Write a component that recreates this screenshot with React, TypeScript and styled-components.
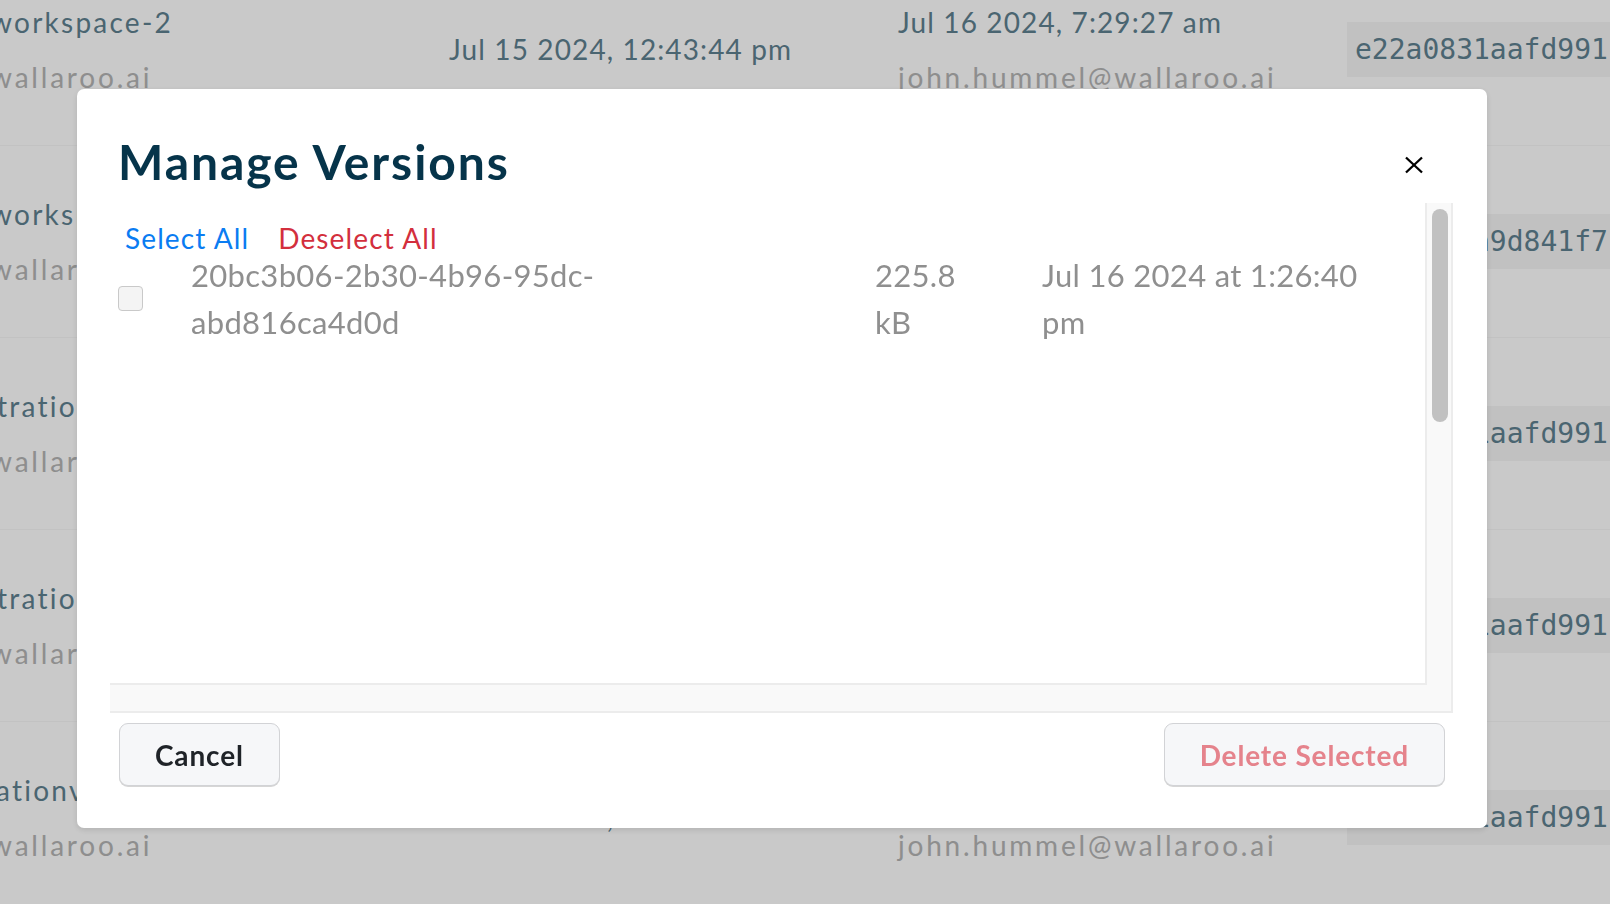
import React from "react";
import styled, { createGlobalStyle } from "styled-components";

const GlobalStyle = createGlobalStyle`
  html, body {
    margin: 0;
    padding: 0;
    width: 100%;
    height: 100%;
    overflow: hidden;
    background: #ffffff;
  }
  body {
    font-family: Lato, "Open Sans", sans-serif;
  }
  #root {
    height: 100%;
  }
`;

const Page = styled.div`
  position: relative;
  width: 1610px;
  height: 904px;
  overflow: hidden;
  background: #ffffff;
`;

const Table = styled.div`
  display: flex;
  flex-direction: column;
  margin-top: -46px;
  margin-left: -10px;
`;

const TableRow = styled.div`
  display: grid;
  grid-template-columns: 459px 449px 449px 1fr;
  align-items: center;
  height: 192px;
  box-sizing: border-box;
  border-bottom: 1px solid #f7f7f7;
`;

const Stack = styled.div`
  display: flex;
  flex-direction: column;
  font-size: 28px;
  line-height: 55px;
  white-space: nowrap;
`;

const NameText = styled.span<{ $indent: number }>`
  padding-left: ${(p) => p.$indent}px;
  color: #5f8190;
  letter-spacing: 0.08em;
`;

const Primary = styled.span`
  color: #5f8190;
  letter-spacing: 0.04em;
`;

const Secondary = styled.span`
  color: #b4b4b4;
  letter-spacing: 0.1em;
`;

const DateText = styled.span`
  font-size: 28px;
  line-height: 55px;
  letter-spacing: 0.04em;
  color: #5f8190;
  white-space: nowrap;
`;

const HashBox = styled.div`
  display: flex;
  align-items: center;
  height: 55px;
  padding-left: 8px;
  background: #f5f5f5;
  font-family: "DejaVu Sans Mono", "Liberation Mono", monospace;
  font-size: 28px;
  color: #5f8190;
  white-space: nowrap;
  overflow: hidden;
`;

const Backdrop = styled.div`
  position: fixed;
  inset: 0;
  background: rgba(0, 0, 0, 0.212);
`;

const Modal = styled.div`
  position: fixed;
  left: 77px;
  top: 89px;
  width: 1410px;
  height: 739px;
  box-sizing: border-box;
  background: #ffffff;
  border-radius: 7px;
  box-shadow: 0 2px 6px rgba(0, 0, 0, 0.12);
  display: flex;
  flex-direction: column;
`;

const ModalHeader = styled.div`
  display: flex;
  align-items: center;
  justify-content: space-between;
  height: 114px;
  box-sizing: border-box;
  padding: 44px 50px 12px 41px;
`;

const Title = styled.h2`
  margin: 0;
  font-family: Lato, sans-serif;
  font-weight: 700;
  font-size: 48px;
  line-height: 1.2;
  letter-spacing: 0.04em;
  color: #06344a;
`;

const CloseButton = styled.button`
  width: 46px;
  height: 46px;
  margin-top: 6px;
  padding: 0;
  border: none;
  background: none;
  display: flex;
  align-items: center;
  justify-content: center;
  cursor: pointer;
`;

const ModalBody = styled.div`
  padding: 0 34px 0 33px;
`;

const ScrollFrame = styled.div`
  display: grid;
  grid-template-columns: 1fr 24px;
  grid-template-rows: 1fr 26px;
  height: 510px;
  box-sizing: border-box;
  background: #f9f9f9;
  border-right: 2px solid #ececec;
  border-bottom: 2px solid #ececec;
`;

const ListArea = styled.div`
  position: relative;
  overflow: hidden;
  background: #ffffff;
  border-right: 2px solid #ececec;
  border-bottom: 2px solid #ececec;
`;

const Track = styled.div`
  padding: 6px 3px 0 5px;
`;

const Thumb = styled.div`
  width: 16px;
  height: 213px;
  border-radius: 8px;
  background: #c1c1c1;
`;

const ListHeader = styled.div`
  position: sticky;
  top: 0;
  z-index: 1;
  display: flex;
  gap: 29px;
  height: 56px;
  box-sizing: border-box;
  padding: 13px 0 0 15px;
  background: #ffffff;
`;

const LinkButton = styled.button<{ $color: string }>`
  padding: 0;
  border: none;
  background: none;
  font-family: Lato, sans-serif;
  font-size: 28px;
  line-height: 42px;
  letter-spacing: 0.04em;
  color: ${(p) => p.$color};
  cursor: pointer;
`;

const VersionRow = styled.div`
  display: grid;
  grid-template-columns: 73px 684px 167px 1fr;
  align-items: center;
  margin-top: -7px;
  padding-left: 8px;
  font-size: 31px;
  line-height: 1.5;
  letter-spacing: 0.01em;
  color: #8f8f8f;
`;

const Checkbox = styled.span`
  display: block;
  width: 25px;
  height: 25px;
  box-sizing: border-box;
  border: 1.5px solid #c9c9c9;
  border-radius: 4px;
  background: #f4f4f4;
`;

const Cell = styled.div<{ $padRight: number }>`
  padding-right: ${(p) => p.$padRight}px;
`;

const ModalFooter = styled.div`
  display: flex;
  justify-content: space-between;
  padding: 10px 42px 0 42px;
`;

const FooterButton = styled.button<{ $color: string }>`
  height: 63px;
  padding: 0 35px;
  box-sizing: border-box;
  border: 1.5px solid #d2d3d6;
  border-radius: 9px;
  background: #f6f7f9;
  box-shadow: 0 1px 0 #d6d6d6;
  font-family: Lato, sans-serif;
  font-weight: 700;
  font-size: 28px;
  letter-spacing: 0.03em;
  color: ${(p) => p.$color};
  cursor: pointer;
`;

type BgRow = { name: string; indent: number; date: string; modified: string; hash: string };

const rows: BgRow[] = [
  { name: "workspace-2", indent: 0, date: "Jul 15 2024, 12:43:44 pm", modified: "Jul 16 2024, 7:29:27 am", hash: "e22a0831aafd991" },
  { name: "workspace-3", indent: 0, date: "Jul 15 2024, 12:41:02 pm", modified: "Jul 16 2024, 7:28:51 am", hash: "5b8e1c3a9d841f7" },
  { name: "tration-test", indent: 7, date: "Jul 12 2024, 3:17:20 pm", modified: "Jul 16 2024, 7:26:13 am", hash: "e22a0831aafd991" },
  { name: "tration-demo", indent: 7, date: "Jul 12 2024, 3:02:45 pm", modified: "Jul 16 2024, 7:25:40 am", hash: "e22a0831aafd991" },
  { name: "ationvalidation", indent: 6, date: "Jul 11 2024, 9:15:36 am", modified: "Jul 16 2024, 7:24:58 am", hash: "e22a0831aafd991" },
];

const CloseIcon = () => (
  <svg width="20" height="20" viewBox="0 0 20 20" aria-hidden="true">
    <line x1="2" y1="2.5" x2="18" y2="17.5" stroke="#000" strokeWidth="2.3" strokeLinecap="butt" />
    <line x1="18" y1="2.5" x2="2" y2="17.5" stroke="#000" strokeWidth="2.3" strokeLinecap="butt" />
  </svg>
);

export default function App() {
  return (
    <>
      <GlobalStyle />
      <Page>
        <Table>
          {rows.map((r, i) => (
            <TableRow key={i}>
              <Stack>
                <NameText $indent={r.indent}>{r.name}</NameText>
                <Secondary>wallaroo.ai</Secondary>
              </Stack>
              <DateText>{r.date}</DateText>
              <Stack>
                <Primary>{r.modified}</Primary>
                <Secondary>john.hummel@wallaroo.ai</Secondary>
              </Stack>
              <HashBox>{r.hash}</HashBox>
            </TableRow>
          ))}
        </Table>
        <Backdrop />
        <Modal role="dialog" aria-modal="true">
          <ModalHeader>
            <Title>Manage Versions</Title>
            <CloseButton aria-label="Close">
              <CloseIcon />
            </CloseButton>
          </ModalHeader>
          <ModalBody>
            <ScrollFrame>
              <ListArea>
                <ListHeader>
                  <LinkButton $color="#0a7cf2">Select All</LinkButton>
                  <LinkButton $color="#d32f3d">Deselect All</LinkButton>
                </ListHeader>
                <VersionRow>
                  <Checkbox />
                  <Cell $padRight={110}>20bc3b06-2b30-4b96-95dc-abd816ca4d0d</Cell>
                  <Cell $padRight={60}>225.8 kB</Cell>
                  <Cell $padRight={40}>Jul 16 2024 at 1:26:40 pm</Cell>
                </VersionRow>
              </ListArea>
              <Track>
                <Thumb />
              </Track>
            </ScrollFrame>
          </ModalBody>
          <ModalFooter>
            <FooterButton $color="#1f2328">Cancel</FooterButton>
            <FooterButton $color="#e5838c">Delete Selected</FooterButton>
          </ModalFooter>
        </Modal>
      </Page>
    </>
  );
}
